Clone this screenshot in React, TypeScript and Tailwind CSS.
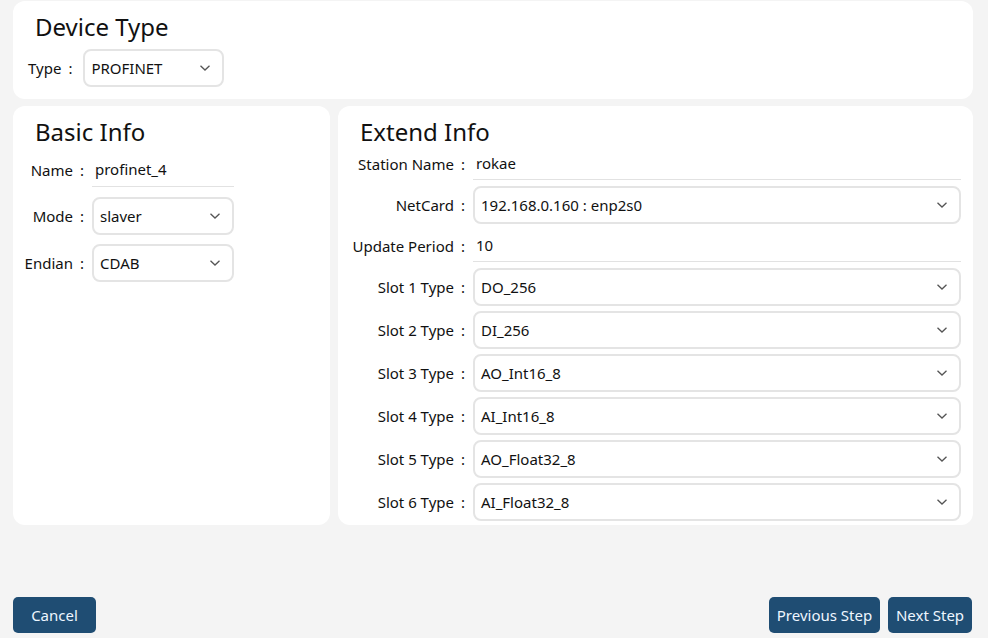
import React from "react";

const FONT = { fontFamily: '"Noto Sans", "Liberation Sans", sans-serif' };

function Chevron() {
  return (
    <svg width="10" height="6" viewBox="0 0 10 6" className="shrink-0">
      <polyline points="0.5,0.8 5,5 9.5,0.8" fill="none" stroke="#555" strokeWidth="1.3" />
    </svg>
  );
}

function Select({ value, className }: { value: string; className: string }) {
  return (
    <div
      className={`h-[38px] border-2 border-[#e4e4e4] rounded-[8px] flex items-center justify-between pl-[6px] pr-[12px] text-[15px] text-[#111] bg-white ${className}`}
    >
      <span>{value}</span>
      <Chevron />
    </div>
  );
}

function Colon() {
  return <span className="inline-block w-[18px] text-center">:</span>;
}

function ExtRow({
  label,
  children,
  className = "",
  labelClass = "",
}: {
  label: string;
  children: React.ReactNode;
  className?: string;
  labelClass?: string;
}) {
  return (
    <div className={`flex items-center ${className}`}>
      <div className={`w-[135px] shrink-0 text-right text-[15px] text-[#111] pr-[1px] whitespace-nowrap ${labelClass}`}>
        {label}
        <Colon />
      </div>
      {children}
    </div>
  );
}

function TextVal({ value }: { value: string }) {
  return (
    <div className="flex-1 h-[38px] border-b border-[#e2e2e2] flex items-center pt-[6px] pl-[3px] text-[15px] text-[#111]">
      {value}
    </div>
  );
}

export default function App() {
  const slots = ["DO_256", "DI_256", "AO_Int16_8", "AI_Int16_8", "AO_Float32_8", "AI_Float32_8"];
  return (
    <div style={FONT} className="w-[988px] h-[638px] bg-[#f4f4f4] flex flex-col pl-[13px] pr-[15px] pt-[1px] overflow-hidden">
      {/* Device Type card */}
      <div className="bg-white rounded-[12px] h-[98px] pt-[10px] pl-[15px]">
        <div className="text-[24px] leading-[32px] text-[#111] ml-[7px]">Device Type</div>
        <div className="flex items-center mt-[6px]">
          <div className="text-[15px] text-[#111] whitespace-nowrap">
            Type
            <Colon />
          </div>
          <Select value="PROFINET" className="w-[141px] ml-[4px] pl-[6px]" />
        </div>
      </div>

      {/* Middle cards */}
      <div className="flex gap-[8px] mt-[7px] h-[419px]">
        <div className="bg-white rounded-[12px] w-[317px] pt-[9px]">
          <div className="text-[24px] leading-[33px] text-[#111] ml-[22px]">Basic Info</div>
          <div className="flex items-center">
            <div className="w-[79px] text-right text-[15px] text-[#111] whitespace-nowrap pr-[1px] pt-[5px]">
              Name
              <Colon />
            </div>
            <div className="w-[142px] h-[39px] border-b border-[#e2e2e2] flex items-center pt-[5px] pl-[3px] text-[15px] text-[#111]">
              profinet_4
            </div>
          </div>
          <div className="flex items-center mt-[10px]">
            <div className="w-[79px] text-right text-[15px] text-[#111] whitespace-nowrap pr-[1px]">
              Mode
              <Colon />
            </div>
            <Select value="slaver" className="w-[142px]" />
          </div>
          <div className="flex items-center mt-[9px]">
            <div className="w-[79px] text-right text-[15px] text-[#111] whitespace-nowrap pr-[1px]">
              Endian
              <Colon />
            </div>
            <Select value="CDAB" className="w-[142px]" />
          </div>
        </div>

        <div className="bg-white rounded-[12px] flex-1 pt-[9px] pr-[12px]">
          <div className="text-[24px] leading-[33px] h-[27px] text-[#111] ml-[22px]">Extend Info</div>
          <ExtRow label="Station Name" labelClass="pt-[6px]">
            <TextVal value="rokae" />
          </ExtRow>
          <ExtRow label="NetCard" className="mt-[6px]">
            <Select value="192.168.0.160 : enp2s0" className="flex-1" />
          </ExtRow>
          <ExtRow label="Update Period" labelClass="pt-[6px]">
            <TextVal value="10" />
          </ExtRow>
          <div className="flex flex-col gap-[5px] mt-[6px]">
            {slots.map((s, i) => (
              <ExtRow key={s} label={`Slot ${i + 1} Type`}>
                <Select value={s} className="flex-1" />
              </ExtRow>
            ))}
          </div>
        </div>
      </div>

      {/* Bottom buttons */}
      <div className="flex-1 flex items-end justify-between pb-[5px] pr-[1px]">
        <button className="h-[36px] w-[83px] rounded-[5px] bg-[#1f4d73] text-[#eef6ff] text-[15px]">Cancel</button>
        <div className="flex gap-[8px]">
          <button className="h-[36px] w-[111px] rounded-[5px] bg-[#1f4d73] text-[#eef6ff] text-[15px] whitespace-nowrap">Previous Step</button>
          <button className="h-[36px] w-[84px] rounded-[5px] bg-[#1f4d73] text-[#eef6ff] text-[15px] whitespace-nowrap">Next Step</button>
        </div>
      </div>
    </div>
  );
}
